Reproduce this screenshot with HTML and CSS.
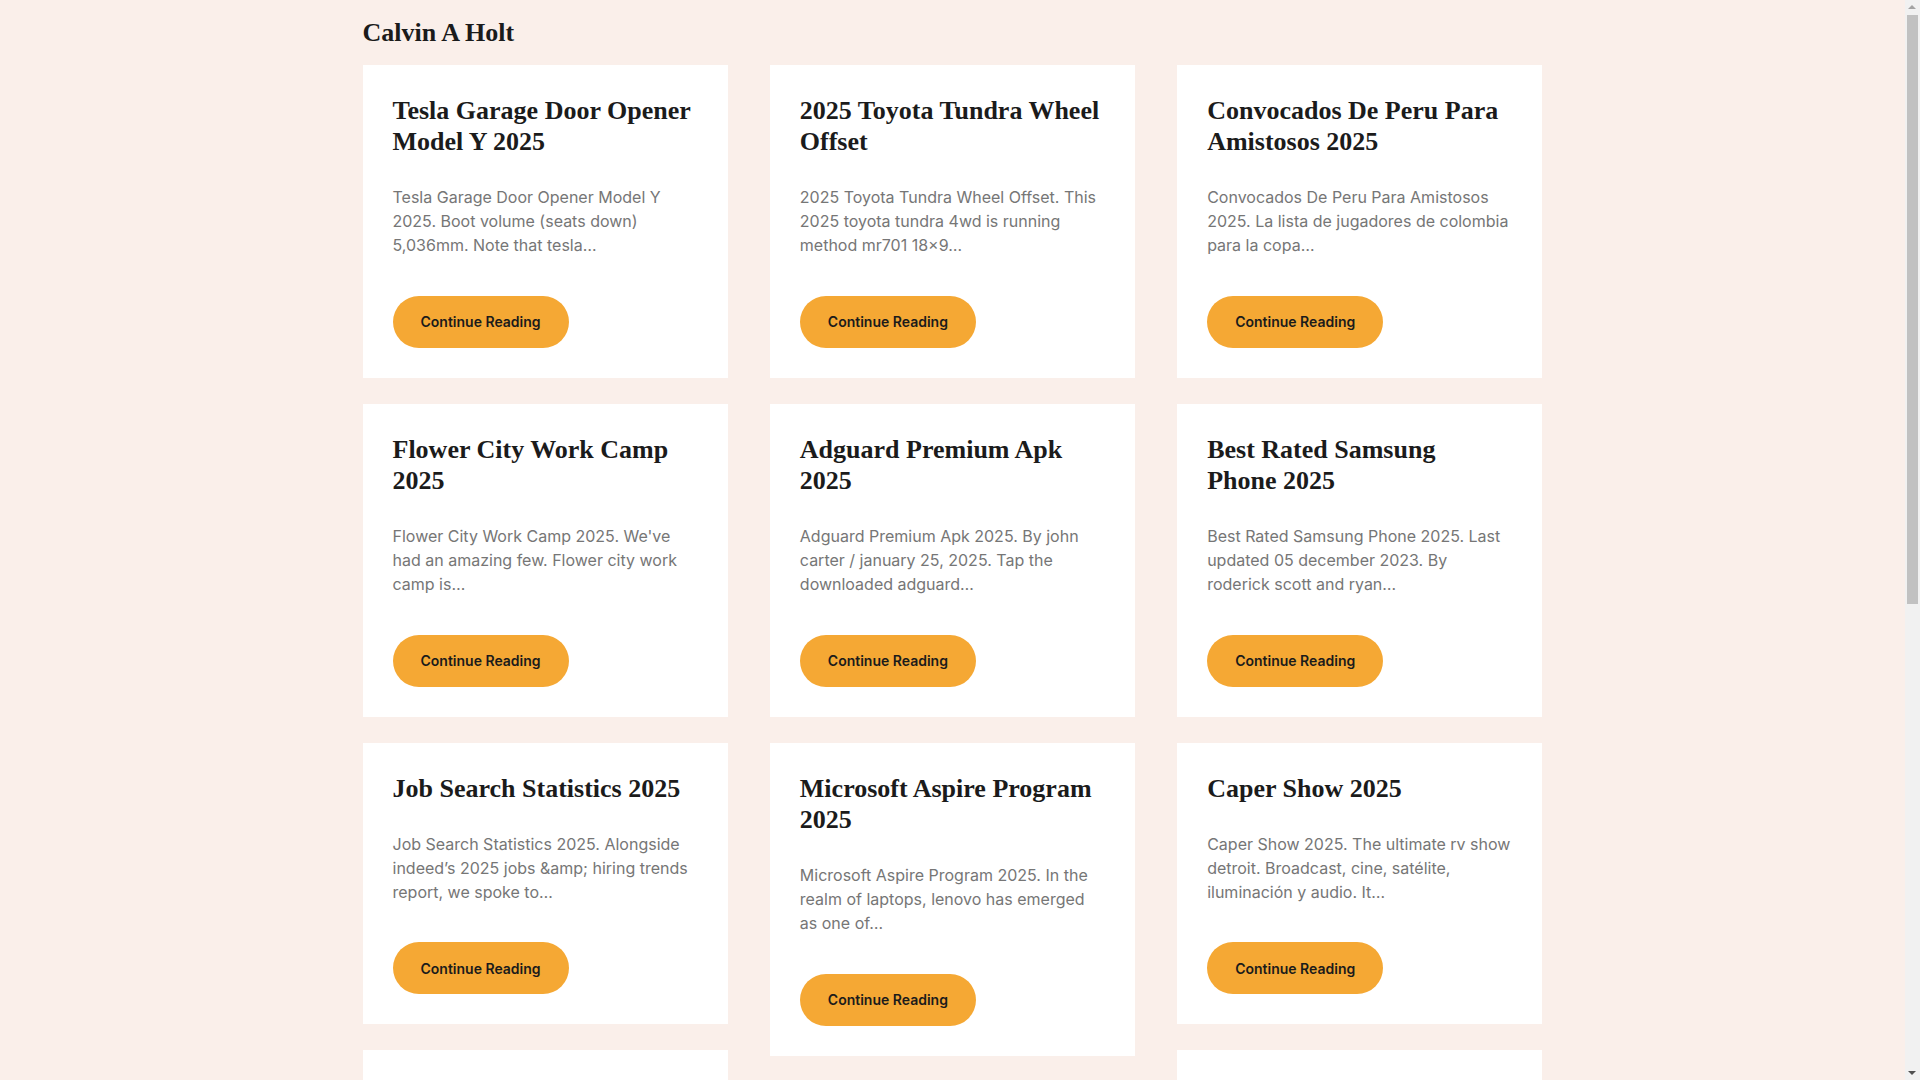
FILE: index.html
```html
<!DOCTYPE html>
<html lang="en">
<head>
<meta charset="utf-8">
<title>Calvin A Holt</title>
<link rel="stylesheet" href="styles.css">
</head>
<body>
<div class="site">
  <header class="site-header">
    <a class="site-title" href="#">Calvin A Holt</a>
  </header>
  <main class="grid">
    <div class="col">
      <article class="card">
        <h2 class="card-title">Tesla Garage Door Opener Model Y 2025</h2>
        <p class="card-excerpt">Tesla Garage Door Opener Model Y 2025. Boot volume (seats down) 5,036mm. Note that tesla…</p>
        <a class="btn" href="#">Continue Reading</a>
      </article>
      <article class="card">
        <h2 class="card-title">Flower City Work Camp 2025</h2>
        <p class="card-excerpt">Flower City Work Camp 2025. We've had an amazing few. Flower city work camp is…</p>
        <a class="btn" href="#">Continue Reading</a>
      </article>
      <article class="card">
        <h2 class="card-title">Job Search Statistics 2025</h2>
        <p class="card-excerpt">Job Search Statistics 2025. Alongside indeed’s 2025 jobs &amp;amp; hiring trends report, we spoke to…</p>
        <a class="btn" href="#">Continue Reading</a>
      </article>
      <article class="card">
        <h2 class="card-title">Nfl Draft Order 2025 Projected</h2>
        <p class="card-excerpt">Nfl Draft Order 2025 Projected. The order for the first round of the draft is…</p>
        <a class="btn" href="#">Continue Reading</a>
      </article>
    </div>
    <div class="col">
      <article class="card">
        <h2 class="card-title">2025 Toyota Tundra Wheel Offset</h2>
        <p class="card-excerpt">2025 Toyota Tundra Wheel Offset. This 2025 toyota tundra 4wd is running method mr701 18×9…</p>
        <a class="btn" href="#">Continue Reading</a>
      </article>
      <article class="card">
        <h2 class="card-title">Adguard Premium Apk 2025</h2>
        <p class="card-excerpt">Adguard Premium Apk 2025. By john carter / january 25, 2025. Tap the downloaded adguard…</p>
        <a class="btn" href="#">Continue Reading</a>
      </article>
      <article class="card">
        <h2 class="card-title">Microsoft Aspire Program 2025</h2>
        <p class="card-excerpt">Microsoft Aspire Program 2025. In the realm of laptops, lenovo has emerged as one of…</p>
        <a class="btn" href="#">Continue Reading</a>
      </article>
      <article class="card">
        <h2 class="card-title">Fiesta Bowl 2025 Tickets</h2>
        <p class="card-excerpt">Fiesta Bowl 2025 Tickets. Get ready for an exciting matchup at the stadium this…</p>
        <a class="btn" href="#">Continue Reading</a>
      </article>
    </div>
    <div class="col">
      <article class="card">
        <h2 class="card-title">Convocados De Peru Para Amistosos 2025</h2>
        <p class="card-excerpt">Convocados De Peru Para Amistosos 2025. La lista de jugadores de colombia para la copa…</p>
        <a class="btn" href="#">Continue Reading</a>
      </article>
      <article class="card">
        <h2 class="card-title">Best Rated Samsung<br>Phone 2025</h2>
        <p class="card-excerpt">Best Rated Samsung Phone 2025. Last updated 05 december 2023. By roderick scott and ryan…</p>
        <a class="btn" href="#">Continue Reading</a>
      </article>
      <article class="card">
        <h2 class="card-title">Caper Show 2025</h2>
        <p class="card-excerpt">Caper Show 2025. The ultimate rv show detroit. Broadcast, cine, satélite, iluminación y audio. It…</p>
        <a class="btn" href="#">Continue Reading</a>
      </article>
      <article class="card">
        <h2 class="card-title">Bmw X3 2025 Release Date</h2>
        <p class="card-excerpt">Bmw X3 2025 Release Date. The new model arrives with a refreshed design and…</p>
        <a class="btn" href="#">Continue Reading</a>
      </article>
    </div>
  </main>
  <footer class="site-footer">
    <p class="footer-text">Copyright © 2025 Calvin A Holt</p>
  </footer>
</div>
<div class="scrollbar" aria-hidden="true">
  <span class="sb-arrow sb-up"></span>
  <span class="sb-thumb"></span>
  <span class="sb-arrow sb-down"></span>
</div>
</body>
</html>
```
FILE: styles.css
```css
html {
  scrollbar-width: none;
}
html::-webkit-scrollbar {
  display: none;
}
html, body {
  margin: 0;
  padding: 0;
}
body {
  background: #faefea;
  color: #1b1b1b;
  font-family: "Inter", "Liberation Sans", sans-serif;
  padding-right: 15px;
}
.site {
  width: 1180px;
  margin: 0 auto;
}
.site-header {
  height: 65px;
  display: flex;
  align-items: flex-start;
}
.site-title {
  font-family: "Liberation Serif", serif;
  font-weight: 700;
  font-size: 26px;
  line-height: 31px;
  margin-top: 17px;
  color: #1b1b1b;
  text-decoration: none;
}
.grid {
  display: flex;
  gap: 42px;
  align-items: flex-start;
}
.col {
  flex: 1;
  display: flex;
  flex-direction: column;
  gap: 26px;
  min-width: 0;
}
.card {
  background: #ffffff;
  padding: 30px;
}
.card-title {
  font-family: "Liberation Serif", serif;
  font-weight: 700;
  font-size: 26px;
  line-height: 1.2;
  margin: 0 0 28px;
  color: #1b1b1b;
}
.card-excerpt {
  margin: 0 0 38.5px;
  font-size: 16px;
  line-height: 24px;
  color: #767676;
}
.btn {
  display: inline-flex;
  align-items: center;
  height: 52px;
  padding: 0 28px;
  border-radius: 26px;
  background: #f5a834;
  color: #1b1b1b;
  font-weight: 600;
  font-size: 14px;
  text-decoration: none;
}
.site-footer {
  padding: 60px 0 80px;
  text-align: center;
}
.footer-text {
  margin: 0;
  font-size: 14px;
  color: #767676;
}
.scrollbar {
  position: fixed;
  top: 0;
  right: 0;
  width: 15px;
  height: 100vh;
  background: #f1f1f1;
}
.sb-thumb {
  position: absolute;
  top: 15px;
  left: 2px;
  width: 11px;
  height: 589px;
  background: #c1c1c1;
}
.sb-arrow {
  position: absolute;
  left: 3px;
  width: 0;
  height: 0;
  border-left: 4px solid transparent;
  border-right: 4px solid transparent;
}
.sb-up {
  top: 5px;
  border-bottom: 4px solid #a3a3a3;
}
.sb-down {
  bottom: 5px;
  border-top: 4px solid #505050;
}
```
